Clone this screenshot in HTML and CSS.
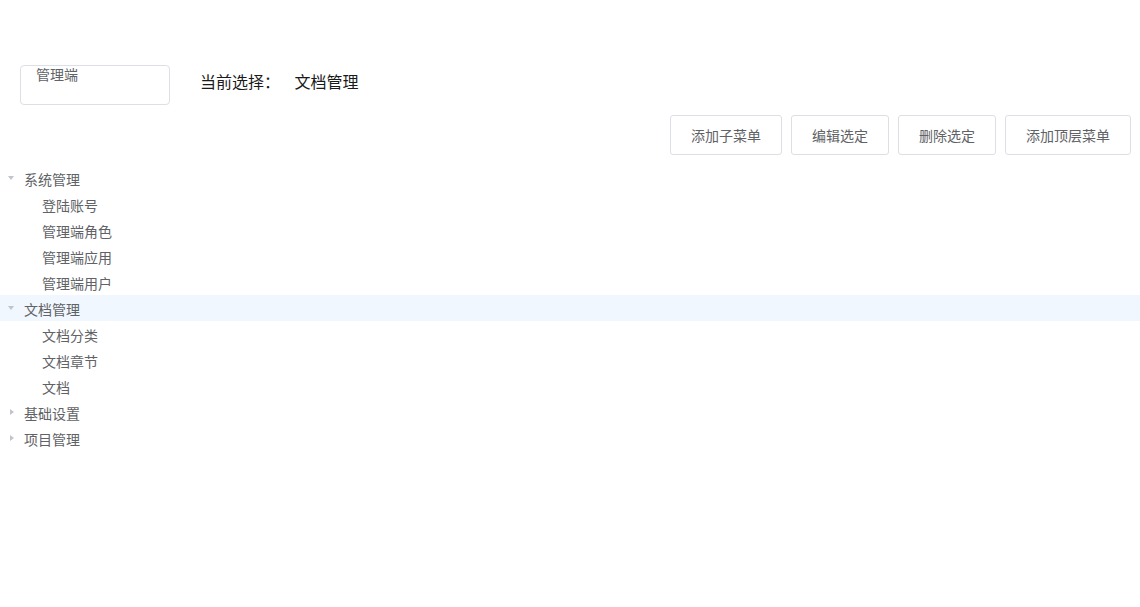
FILE: index.html
```html
<!DOCTYPE html>
<html lang="zh-CN">
<head>
  <meta charset="UTF-8" />
  <title>菜单管理</title>
  <link rel="stylesheet" href="styles.css">
</head>
<body>
  <div class="page">
    <div class="top-row">
      <div class="app-select">管理端</div>
      <div class="current">
        <span class="current-label">当前选择：</span>
        <span class="current-value">文档管理</span>
      </div>
    </div>

    <div class="toolbar">
      <button class="btn">添加子菜单</button>
      <button class="btn">编辑选定</button>
      <button class="btn">删除选定</button>
      <button class="btn">添加顶层菜单</button>
    </div>

    <div class="tree">
      <div class="node"><span class="caret down"></span>系统管理</div>
      <div class="node child"><span class="caret none"></span>登陆账号</div>
      <div class="node child"><span class="caret none"></span>管理端角色</div>
      <div class="node child"><span class="caret none"></span>管理端应用</div>
      <div class="node child"><span class="caret none"></span>管理端用户</div>
      <div class="node current-node"><span class="caret down"></span>文档管理</div>
      <div class="node child"><span class="caret none"></span>文档分类</div>
      <div class="node child"><span class="caret none"></span>文档章节</div>
      <div class="node child"><span class="caret none"></span>文档</div>
      <div class="node"><span class="caret right"></span>基础设置</div>
      <div class="node"><span class="caret right"></span>项目管理</div>
    </div>
  </div>
</body>
</html>
```

FILE: styles.css
```css
body {
  margin: 0;
  padding: 0;
  background: #fff;
  font-family: 'Liberation Sans', 'Noto Sans CJK SC', sans-serif;
  font-size: 14px;
  color: #606266;
}
.page {
  padding-top: 65px;
}
.top-row {
  display: flex;
  align-items: flex-start;
  padding-left: 20px;
}
.app-select {
  box-sizing: border-box;
  width: 150px;
  height: 40px;
  border: 1px solid #dcdfe6;
  border-radius: 4px;
  padding: 0 15px;
  line-height: 19px;
  color: #606266;
}
.current {
  margin-left: 30px;
  margin-top: 8px;
  font-size: 16px;
  line-height: 20px;
  color: #1a1a1a;
}
.current-value {
  margin-left: 10px;
}
.toolbar {
  display: flex;
  justify-content: flex-end;
  gap: 9px;
  padding-right: 9px;
  margin-top: 10px;
}
.btn {
  box-sizing: border-box;
  height: 40px;
  padding: 0 20px;
  border: 1px solid #dcdfe6;
  border-radius: 3px;
  background: #fff;
  color: #606266;
  font-family: inherit;
  font-size: 14px;
  cursor: pointer;
}
.tree {
  margin-top: 10px;
}
.node {
  display: flex;
  align-items: center;
  box-sizing: border-box;
  height: 26px;
  padding-top: 2px;
  color: #606266;
}
.node.child {
  padding-left: 18px;
}
.node.current-node {
  background: #f0f7ff;
}
.caret {
  width: 24px;
  height: 24px;
  position: relative;
  flex: none;
}
.caret.down::before {
  content: "";
  position: absolute;
  left: 8px;
  top: 9px;
  border-left: 3.5px solid transparent;
  border-right: 3.5px solid transparent;
  border-top: 4px solid #c0c4cc;
}
.caret.right::before {
  content: "";
  position: absolute;
  left: 10px;
  top: 8px;
  border-top: 3.5px solid transparent;
  border-bottom: 3.5px solid transparent;
  border-left: 4px solid #c0c4cc;
}
```
